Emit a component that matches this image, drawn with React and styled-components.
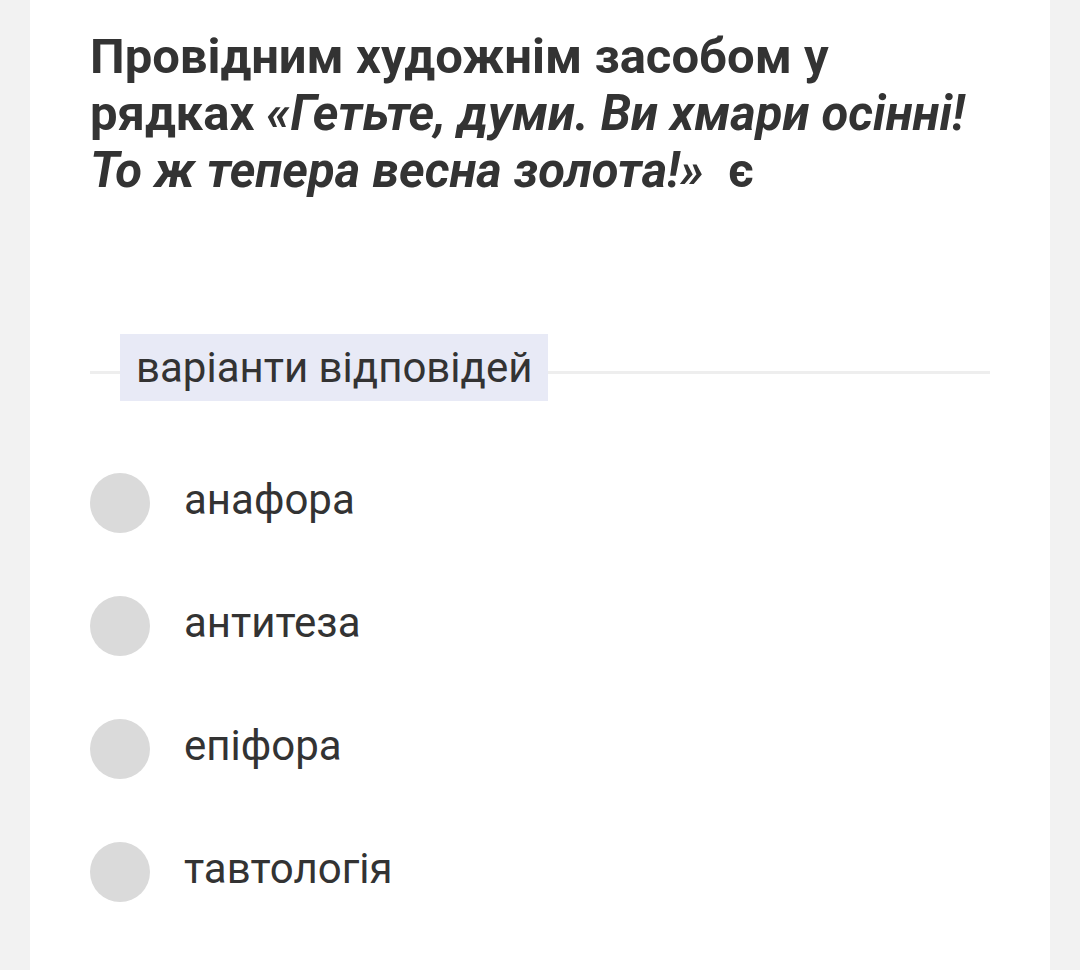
import React from 'react';
import styled, { createGlobalStyle } from 'styled-components';

const Global = createGlobalStyle`
  html, body {
    margin: 0;
    padding: 0;
    background: #f2f2f2;
  }
  body {
    font-family: Roboto, "Noto Sans", sans-serif;
    color: #333;
  }
`;

const Page = styled.div`
  display: flex;
  justify-content: flex-start;
  padding-left: 30px;
  min-height: 970px;
`;

const Card = styled.div`
  width: 1020px;
  min-height: 970px;
  background: #fff;
  padding: 28px 60px 0 60px;
  box-sizing: border-box;
`;

const Question = styled.div`
  font-size: 49px;
  font-weight: 700;
  line-height: 57px;
  color: #333;
  width: 900px;
  em {
    font-style: italic;
  }
`;

const Divider = styled.div`
  position: relative;
  display: flex;
  align-items: center;
  margin-top: 135px;
  width: 900px;
  &::before {
    content: '';
    position: absolute;
    left: 0;
    right: 0;
    top: 37px;
    height: 3px;
    background: #eeeeee;
  }
`;

const Label = styled.span`
  position: relative;
  margin-left: 30px;
  padding: 0 16px;
  height: 67px;
  display: flex;
  align-items: center;
  background: #e8eaf6;
  font-size: 42px;
  color: #333;
`;

const Options = styled.div`
  display: flex;
  flex-direction: column;
  gap: 63px;
  margin-top: 72px;
`;

const Option = styled.label`
  display: flex;
  align-items: center;
  gap: 34px;
  height: 60px;
  font-size: 42px;
  color: #333;
`;

const Radio = styled.span`
  width: 60px;
  height: 60px;
  border-radius: 50%;
  background: #dadada;
  flex-shrink: 0;
`;

const OptionText = styled.span`
  margin-top: -8px;
`;

const answers = ['анафора', 'антитеза', 'епіфора', 'тавтологія'];

export default function App() {
  return (
    <Page>
      <Global />
      <Card>
        <Question>
          Провідним художнім засобом у рядках{' '}
          <em>«Гетьте, думи. Ви хмари осінні! То ж тепера весна золота!»</em>&nbsp; є
        </Question>
        <Divider>
          <Label>варіанти відповідей</Label>
        </Divider>
        <Options>
          {answers.map((a) => (
            <Option key={a}>
              <Radio />
              <OptionText>{a}</OptionText>
            </Option>
          ))}
        </Options>
      </Card>
    </Page>
  );
}
